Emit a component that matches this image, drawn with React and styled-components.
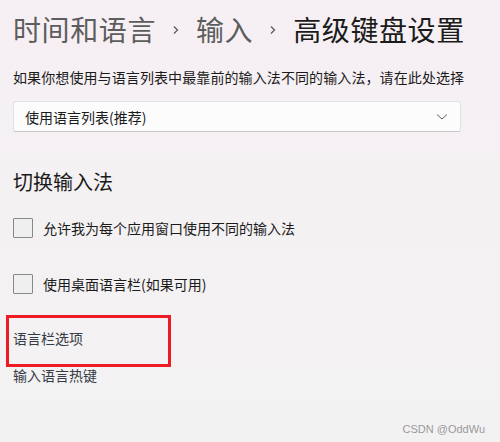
import React from 'react';
import styled, {createGlobalStyle} from 'styled-components';

const Global = createGlobalStyle`
    html, body {
        margin: 0;
        padding: 0;
    }
    body {
        font-family: "Noto Sans CJK SC", "Noto Sans", sans-serif;
        background: #f3f2f3;
    }
`

const Page = styled.div`
    width: 500px;
    height: 442px;
    box-sizing: border-box;
    padding: 9px 0 0 13px;
    position: relative;
    overflow: hidden;
    background: linear-gradient(180deg, #f6eff4 0%, #f4f1f3 45%, #f3f2f3 100%);
`

const Breadcrumb = styled.div`
    display: flex;
    align-items: center;
    height: 40px;
    font-size: 28px;
    line-height: 40px;
    letter-spacing: 0.6px;
    white-space: nowrap;
`

const Crumb = styled.span`
    color: ${p => p.current ? '#1b1b1b' : '#5d5d5d'};
`

const Sep = styled.svg`
    width: 10px;
    height: 10px;
    margin: 2px 15px 0 15px;
`

const Hint = styled.div`
    margin-top: 18px;
    font-size: 14px;
    line-height: 20px;
    color: #1b1b1b;
    letter-spacing: 0.1px;
`

const Select = styled.div`
    margin-top: 14px;
    width: 448px;
    height: 31px;
    box-sizing: border-box;
    background: #fdfcfd;
    border: 1px solid #e3e1e3;
    border-bottom-color: #c8c6c8;
    border-radius: 3px;
    display: flex;
    align-items: center;
    justify-content: space-between;
    padding: 0 12px 0 11px;
    font-size: 14px;
    color: #1b1b1b;
`

const Heading = styled.div`
    margin-top: 36px;
    font-size: 20px;
    line-height: 28px;
    color: #1b1b1b;
`

const CheckRow = styled.label`
    display: flex;
    align-items: center;
    gap: 10px;
    margin-top: ${p => p.first ? '22px' : '36px'};
    font-size: 14px;
    color: #1b1b1b;
    height: 20px;
`

const Box = styled.span`
    width: 20px;
    height: 20px;
    box-sizing: border-box;
    border: 1px solid #8a8a8a;
    background: #efefef;
    border-radius: 1px;
`

const LinkBlock = styled.div`
    margin-top: 21px;
    margin-left: -7px;
    width: 165px;
    height: 52px;
    box-sizing: border-box;
    border: 3px solid #ed1c24;
    display: flex;
    align-items: center;
    padding-left: 4px;
    padding-bottom: 7px;
`

const LinkText = styled.div`
    font-size: 14px;
    line-height: 20px;
    color: #363b45;
`

const Plain = styled(LinkText)`
    margin-top: -2px;
`

const Watermark = styled.div`
    position: absolute;
    right: 15px;
    bottom: 7px;
    font-family: "Liberation Sans", Arial, sans-serif;
    font-size: 11px;
    color: #9a9a9a;
`

const Chevron = () => (
    <Sep viewBox="0 0 10 10">
        <path d="M3 1.5 L6.5 5 L3 8.5" fill="none" stroke="#5d5d5d" strokeWidth="1.3" />
    </Sep>
)

const App = () => (
    <Page>
        <Global />
        <Breadcrumb>
            <Crumb>时间和语言</Crumb>
            <Chevron />
            <Crumb>输入</Crumb>
            <Chevron />
            <Crumb current>高级键盘设置</Crumb>
        </Breadcrumb>
        <Hint>如果你想使用与语言列表中最靠前的输入法不同的输入法，请在此处选择</Hint>
        <Select>
            <span>使用语言列表(推荐)</span>
            <svg width="12" height="8" viewBox="0 0 12 8">
                <path d="M1 1.5 L6 6 L11 1.5" fill="none" stroke="#606060" strokeWidth="1" />
            </svg>
        </Select>
        <Heading>切换输入法</Heading>
        <CheckRow first><Box />允许我为每个应用窗口使用不同的输入法</CheckRow>
        <CheckRow><Box />使用桌面语言栏(如果可用)</CheckRow>
        <LinkBlock>
            <LinkText>语言栏选项</LinkText>
        </LinkBlock>
        <Plain>输入语言热键</Plain>
        <Watermark>CSDN @OddWu</Watermark>
    </Page>
)

export default App;
